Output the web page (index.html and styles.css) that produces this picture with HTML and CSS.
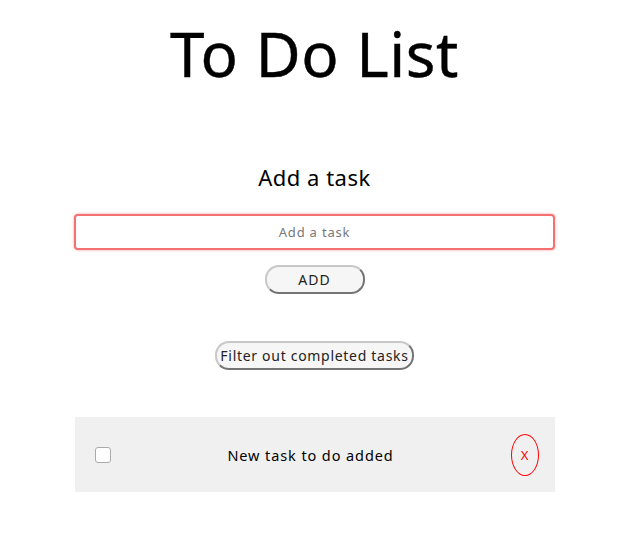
FILE: index.html
```html
<!DOCTYPE html>
<html>
<head>
<meta charset="utf-8">
<link rel="stylesheet" href="styles.css">
</head>
<body>
<div class="app">
  <h1 class="title">To Do List</h1>
  <h2 class="subtitle">Add a task</h2>
  <input class="task-input" type="text" placeholder="Add a task">
  <button class="btn btn-add">ADD</button>
  <button class="btn btn-filter">Filter out completed tasks</button>
  <ul class="list">
    <li class="item">
      <span class="check"></span>
      <span class="item-text">New task to do added</span>
      <button class="del">X</button>
    </li>
  </ul>
</div>
</body>
</html>
```
FILE: styles.css
```css
* { box-sizing: border-box; }
body {
  margin: 0;
  background: #fff;
  font-family: "Noto Sans", "Open Sans", sans-serif;
  color: #000;
}
.app {
  width: 483px;
  padding-right: 2px;
  margin: 0 auto;
  display: flex;
  flex-direction: column;
  align-items: center;
}
.title {
  margin: 14px 0 0;
  font-size: 62px;
  font-weight: 400;
  line-height: 78px;
  letter-spacing: 0.6px;
  -webkit-text-stroke: 0.4px #000;
}
.subtitle {
  margin: 70px 0 0;
  font-size: 22px;
  font-weight: 400;
  line-height: 30px;
  letter-spacing: 0.5px;
}
.task-input {
  margin-top: 22px;
  width: 481px;
  height: 36px;
  border: 2px solid #f27272;
  border-radius: 4px;
  box-shadow: 0 0 3px #f9a0a0;
  text-align: center;
  font-family: inherit;
  font-size: 13px;
  letter-spacing: 0.8px;
  outline: none;
}
.task-input::placeholder { color: #777; }
.btn {
  font-family: inherit;
  color: #222;
  background: #f6f6f6;
  border: 2px outset #c8c8c8;
  border-radius: 14px;
  height: 29px;
  padding: 0;
}
.btn-add { margin-top: 15px; width: 100px; font-size: 14px; letter-spacing: 1px; }
.btn-filter { margin-top: 47px; width: 199px; font-size: 14px; letter-spacing: 0.7px; }
.list {
  list-style: none;
  margin: 47px 0 0;
  padding: 0;
  width: 480px;
}
.item {
  background: #f0f0f0;
  height: 75px;
  display: flex;
  align-items: center;
  padding: 0 16px 0 20px;
}
.check {
  width: 16px;
  height: 16px;
  border: 1px solid #aaa;
  border-radius: 3px;
  background: #fff;
}
.item-text {
  flex: 1;
  text-align: center;
  font-size: 14.5px;
  letter-spacing: 0.9px;
}
.del {
  width: 28px;
  height: 42px;
  border: 1px solid #f00;
  border-radius: 50%;
  background: transparent;
  color: #f00;
  font-family: inherit;
  font-size: 13px;
  padding: 0;
}
```
